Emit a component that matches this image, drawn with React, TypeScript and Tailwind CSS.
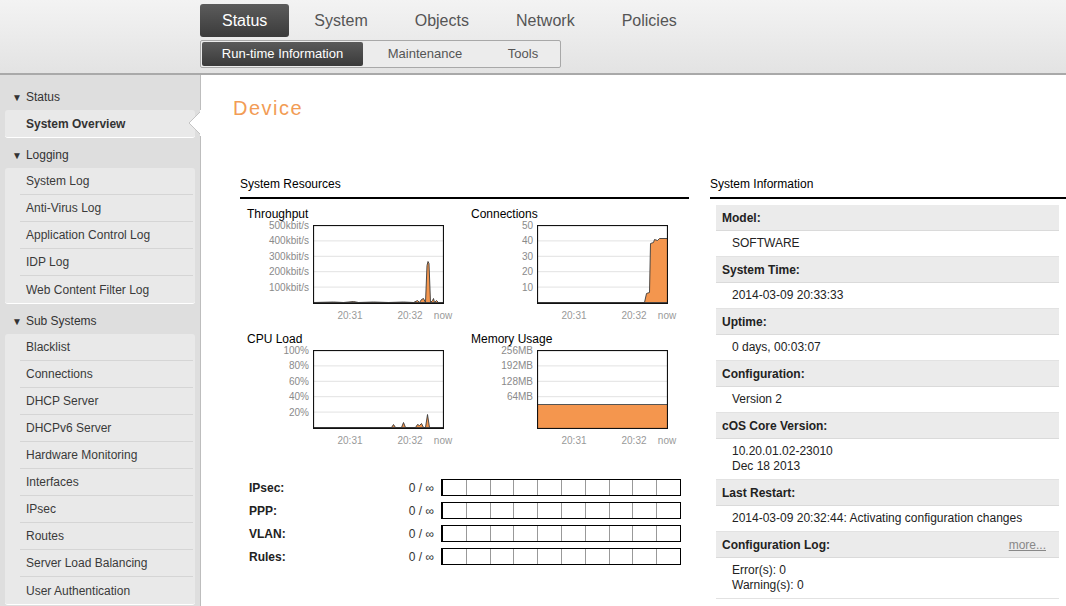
import React from "react";

const mainTabs = ["Status", "System", "Objects", "Network", "Policies"];

const sideGroups = [
  { title: "Status", items: ["System Overview"] },
  {
    title: "Logging",
    items: ["System Log", "Anti-Virus Log", "Application Control Log", "IDP Log", "Web Content Filter Log"],
  },
  {
    title: "Sub Systems",
    items: [
      "Blacklist",
      "Connections",
      "DHCP Server",
      "DHCPv6 Server",
      "Hardware Monitoring",
      "Interfaces",
      "IPsec",
      "Routes",
      "Server Load Balancing",
      "User Authentication",
    ],
  },
];

const infoRows: { label: string; value: string[]; more?: boolean }[] = [
  { label: "Model:", value: ["SOFTWARE"] },
  { label: "System Time:", value: ["2014-03-09 20:33:33"] },
  { label: "Uptime:", value: ["0 days, 00:03:07"] },
  { label: "Configuration:", value: ["Version 2"] },
  { label: "cOS Core Version:", value: ["10.20.01.02-23010", "Dec 18 2013"] },
  { label: "Last Restart:", value: ["2014-03-09 20:32:44: Activating configuration changes"] },
  { label: "Configuration Log:", value: ["Error(s): 0", "Warning(s): 0"], more: true },
];

const counters = ["IPsec:", "PPP:", "VLAN:", "Rules:"];

// chart area is 130 x 78
const throughput =
  "M0,77 L20,76.5 L30,77 L40,76 L45,77 L60,76.5 L75,77 L90,76.5 L100,77 L104,75 L106,77 L108,74 L110,73 L112,77 L113.5,40 L114.5,36 L115.5,38 L117,77 L119,75 L120,73 L121,77 L123,75 L125,77 L130,77 Z";
const connections =
  "M0,77 L107,77 L109,68 L112,67 L113,18 L116,17 L117,14 L120,15 L122,13 L130,13 L130,77 Z";
const cpu =
  "M0,77 L78,77 L80,74 L82,77 L88,77 L90,72 L92,77 L102,77 L104,74 L106,75 L108,73 L110,77 L112,77 L114,64 L116,77 L130,77 Z";

function Chart({
  label,
  yLabels,
  path,
  memory,
}: {
  label: string;
  yLabels: string[];
  path?: string;
  memory?: boolean;
}) {
  return (
    <div className="w-[224px]">
      <div className="text-[12px] leading-[14px] text-black mb-[4px]">{label}</div>
      <div className="flex">
        <div className="w-[62px] mr-[4px] h-[78px] flex flex-col items-end text-[10px] leading-[10px] text-[#8a8a8a]">
          <div className="-mt-[4px]">
            {yLabels.map((y) => (
              <div key={y} className="h-[15.4px] text-right">
                {y}
              </div>
            ))}
          </div>
        </div>
        <div className="relative">
          <svg width="131" height="79" viewBox="-0.5 -0.5 131 79" className="block">
            <rect x="0" y="0" width="130" height="78" fill="white" />
            {[15.4, 30.8, 46.2, 61.6].map((g) => (
              <line key={g} x1="0" x2="130" y1={g} y2={g} stroke="#e2e2e2" strokeWidth="1" />
            ))}
            {path && <path d={path} fill="#f4964e" stroke="#3a3a3a" strokeWidth="0.9" strokeLinejoin="round" />}
            {memory && (
              <>
                <rect x="0" y="54" width="130" height="24" fill="#f4964e" />
                <line x1="0" x2="130" y1="54" y2="54" stroke="#555" strokeWidth="1" />
              </>
            )}
            <rect x="0" y="0" width="130" height="78" fill="none" stroke="#111" strokeWidth="1.2" />
          </svg>
          <div className="relative h-[20px] text-[10px] text-[#999] leading-[10px]">
            <span className="absolute top-[7px] left-[37px] -translate-x-1/2">20:31</span>
            <span className="absolute top-[7px] left-[97px] -translate-x-1/2">20:32</span>
            <span className="absolute top-[7px] left-[130px] -translate-x-1/2">now</span>
          </div>
        </div>
      </div>
    </div>
  );
}

export default function App() {
  return (
    <div className="w-[1066px] h-[606px] overflow-hidden bg-white font-['Liberation_Sans',Arial,sans-serif] text-[12px] text-[#222]">
      {/* Top navigation */}
      <div className="h-[75px] bg-gradient-to-b from-[#f3f3f3] to-[#e3e3e3] border-b-2 border-[#a9a9a9] pl-[200px] pt-[4px]">
        <div className="flex gap-[3px]">
          {mainTabs.map((t, i) => (
            <div
              key={t}
              className={`h-[33px] px-[22px] flex items-center pt-[1px] text-[16px] rounded-[3px] ${
                i === 0 ? "bg-gradient-to-b from-[#5c5c5c] to-[#3b3b3b] text-white" : "text-[#555]"
              }`}
            >
              {t}
            </div>
          ))}
        </div>
        <div className="mt-[3px] inline-flex h-[28px] border border-[#a8a8a8] rounded-[2px] bg-[#ececec] p-[1px] text-[13px]">
          <div className="w-[161px] flex items-center justify-center bg-gradient-to-b from-[#5a5a5a] to-[#3a3a3a] text-white rounded-[2px]">
            Run-time Information
          </div>
          <div className="w-[124px] flex items-center justify-center text-[#555]">Maintenance</div>
          <div className="w-[72px] flex items-center justify-center text-[#555]">Tools</div>
        </div>
      </div>

      <div className="flex h-[531px]">
        {/* Sidebar */}
        <div className="w-[201px] shrink-0 bg-[#dedede] border-r border-[#bdbdbd] pt-[9px] pl-[5px] pr-[5px] relative">
          {sideGroups.map((g, gi) => (
            <div key={g.title} className="mb-[4px]">
              <div className="h-[26px] flex items-center pl-[7px] text-[12px] text-[#333]">
                <span className="text-[10px] mr-[4px]">▼</span>
                {g.title}
              </div>
              <div className="bg-[#e9e9e9] rounded-[3px] border-b border-white">
                {g.items.map((it, ii) => (
                  <div key={it} className="relative h-[27px] pl-[15px]">
                    <div
                      className={`h-full flex items-center pl-[6px] mr-[2px] ${
                        ii < g.items.length - 1 ? "border-b border-[#d5d5d5]" : ""
                      } ${gi === 0 ? "font-bold text-[#333]" : "text-[#3a3a3a]"}`}
                    >
                      {it}
                    </div>
                    {gi === 0 && (
                      <svg width="13" height="26" viewBox="0 0 13 26" className="absolute -right-[6px] top-0">
                        <polygon points="13,1 1,13 13,25" fill="white" stroke="#c4c4c4" strokeWidth="1" />
                        <rect x="12" y="0" width="1" height="26" fill="white" />
                      </svg>
                    )}
                  </div>
                ))}
              </div>
            </div>
          ))}
        </div>

        {/* Main content */}
        <div className="flex-1 pt-[22px]">
          <div className="pl-[32px] text-[20px] leading-[22px] tracking-[1.5px] text-[#f29c55]">Device</div>
          <div className="flex pl-[39px] mt-[58px] gap-[21px]">
            {/* System resources */}
            <div className="w-[449px]">
              <div className="text-[12px] leading-[14px] text-black pb-[6px] border-b-2 border-black">
                System Resources
              </div>
              <div className="pl-[7px] pt-[8px] grid grid-cols-[224px_224px]">
                <Chart label="Throughput" yLabels={["500kbit/s", "400kbit/s", "300kbit/s", "200kbit/s", "100kbit/s"]} path={throughput} />
                <Chart label="Connections" yLabels={["50", "40", "30", "20", "10"]} path={connections} />
                <div className="mt-[8px]">
                  <Chart label="CPU Load" yLabels={["100%", "80%", "60%", "40%", "20%"]} path={cpu} />
                </div>
                <div className="mt-[8px]">
                  <Chart label="Memory Usage" yLabels={["256MB", "192MB", "128MB", "64MB", ""]} memory />
                </div>
              </div>
              <div className="mt-[27px] pl-[9px] pr-[8px] flex flex-col">
                {counters.map((c) => (
                  <div key={c} className="h-[23px] flex items-center">
                    <div className="flex-1 font-bold text-[#222]">{c}</div>
                    <div className="text-[#333]">0 / ∞</div>
                    <div className="ml-[7px] w-[240px] h-[17px] border border-black border-l-2 flex">
                      {Array.from({ length: 10 }).map((_, i) => (
                        <div key={i} className={`flex-1 ${i < 9 ? "border-r border-[#999]" : ""}`} />
                      ))}
                    </div>
                  </div>
                ))}
              </div>
            </div>

            {/* System information */}
            <div className="flex-1">
              <div className="text-[12px] leading-[14px] text-black pb-[6px] border-b-2 border-black">
                System Information
              </div>
              <div className="pl-[6px] pr-[7px] pt-[6px]">
                {infoRows.map((r) => (
                  <div key={r.label}>
                    <div className="h-[26px] bg-[#ebebeb] border-b border-[#dadada] flex items-center justify-between pl-[6px] pr-[13px]">
                      <span className="font-bold text-[#222]">{r.label}</span>
                      {r.more && <span className="text-[#888] underline">more...</span>}
                    </div>
                    <div
                      className={`border-b border-[#e2e2e2] pl-[16px] text-[#222] leading-[15px] ${
                        r.value.length > 1 ? "py-[5px]" : "h-[26px] flex items-center"
                      }`}
                    >
                      {r.value.map((v) => (
                        <div key={v}>{v}</div>
                      ))}
                    </div>
                  </div>
                ))}
              </div>
            </div>
          </div>
        </div>
      </div>
    </div>
  );
}
